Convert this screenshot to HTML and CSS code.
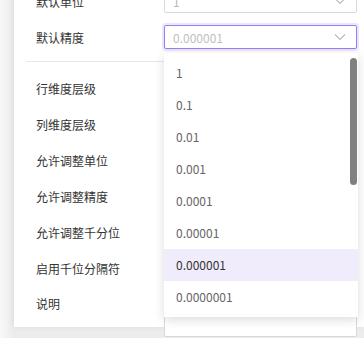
FILE: index.html
```html
<!DOCTYPE html>
<html lang="zh-CN">
<head>
    <meta charset="UTF-8">
    <meta name="viewport" content="width=device-width, initial-scale=1.0">
    <title>精度设置</title>
    <link rel="stylesheet" href="styles.css">
</head>
<body>
    <div class="panel">
        <div class="form">
            <div class="form-row">
                <label class="form-label">默认单位</label>
                <div class="select">
                    <span class="select-value">1</span>
                    <svg class="chevron" width="12" height="8" viewBox="0 0 12 8"><path d="M1 1.5 L6 6.5 L11 1.5" fill="none" stroke="#b8b8b8" stroke-width="1.1"/></svg>
                </div>
            </div>
            <div class="form-row">
                <label class="form-label">默认精度</label>
                <div class="select-wrap">
                    <div class="select focused">
                        <span class="select-placeholder">0.000001</span>
                        <svg class="chevron" width="12" height="8" viewBox="0 0 12 8"><path d="M1 1.5 L6 6.5 L11 1.5" fill="none" stroke="#b8b8b8" stroke-width="1.1"/></svg>
                    </div>
                    <ul class="dropdown">
                        <li class="option">1</li>
                        <li class="option">0.1</li>
                        <li class="option">0.01</li>
                        <li class="option">0.001</li>
                        <li class="option">0.0001</li>
                        <li class="option">0.00001</li>
                        <li class="option active">0.000001</li>
                        <li class="option">0.0000001</li>
                        <div class="scrollbar"></div>
                    </ul>
                </div>
            </div>
            <div class="divider"></div>
            <div class="form-row"><label class="form-label">行维度层级</label></div>
            <div class="form-row"><label class="form-label">列维度层级</label></div>
            <div class="form-row"><label class="form-label">允许调整单位</label></div>
            <div class="form-row"><label class="form-label">允许调整精度</label></div>
            <div class="form-row"><label class="form-label">允许调整千分位</label></div>
            <div class="form-row"><label class="form-label">启用千位分隔符</label></div>
            <div class="form-row top">
                <label class="form-label">说明</label>
                <textarea class="textarea"></textarea>
            </div>
        </div>
    </div>
</body>
</html>
```
FILE: styles.css
```css
body {
    margin: 0;
    height: 338px;
    overflow: hidden;
    background: linear-gradient(to right, #f8f8f8, #ececec 14px);
    font-family: "Noto Sans CJK SC", "Noto Sans", sans-serif;
    font-size: 12px;
    color: #333;
}
.panel {
    margin-left: 14px;
    height: 100%;
    background-color: white;
    box-shadow: -2px 0 6px rgba(0,0,0,0.06);
    padding: 0 7px 0 12px;
}
.form {
    display: flex;
    flex-direction: column;
    gap: 12px;
    margin-top: -11px;
}
.form-row {
    display: flex;
    align-items: center;
    min-height: 24px;
    padding-left: 10px;
}
.form-row.top {
    align-items: flex-start;
}
.form-row.top .form-label {
    line-height: 24px;
}
.form-label {
    width: 128px;
    flex-shrink: 0;
    color: #333;
}
.divider {
    height: 1px;
    background-color: #e8e8e8;
    margin-bottom: 2px;
}
.select-wrap {
    position: relative;
    width: 193px;
}
.select {
    width: 193px;
    height: 24px;
    box-sizing: border-box;
    border: 1px solid #d9d9d9;
    border-radius: 2px;
    display: flex;
    align-items: center;
    justify-content: space-between;
    padding: 0 10px 0 8px;
    background: white;
}
.select.focused {
    border-color: #9b7cf0;
    box-shadow: 0 0 0 2px rgba(155,124,240,0.2);
}
.select-value {
    color: #bbb;
}
.select-placeholder {
    color: #bfbfbf;
}
.chevron {
    display: block;
}
.dropdown {
    position: absolute;
    top: 28px;
    left: 0;
    width: 194px;
    margin: 0;
    padding: 4px 0;
    list-style: none;
    background: white;
    box-shadow: 0 3px 10px rgba(0,0,0,0.14);
    z-index: 10;
}
.option {
    height: 32px;
    line-height: 32px;
    padding-left: 12px;
    color: #666;
}
.option.active {
    background-color: #f0ecfb;
    color: #333;
}
.scrollbar {
    position: absolute;
    top: 5px;
    right: 1px;
    width: 7px;
    height: 127px;
    border-radius: 4px;
    background-color: #808080;
}
.textarea {
    width: 193px;
    height: 45px;
    box-sizing: border-box;
    border: 1px solid #d9d9d9;
    border-radius: 2px;
    resize: none;
    margin: 0;
}
```
